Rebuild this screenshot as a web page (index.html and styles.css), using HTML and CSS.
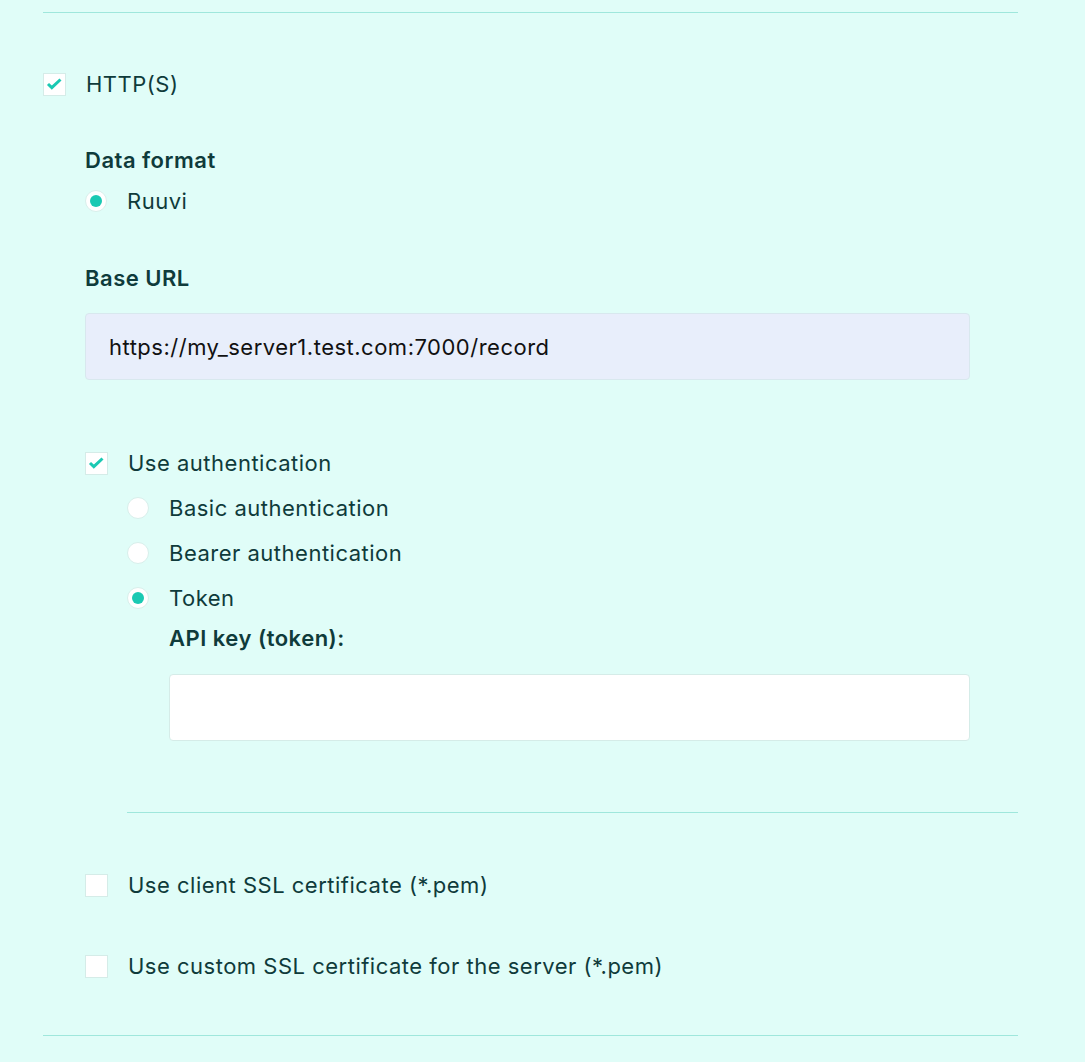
FILE: index.html
```html
<!DOCTYPE html>
<html>
<head>
<meta charset="utf-8">
<link rel="stylesheet" href="styles.css">
</head>
<body>
<div class="page">
  <div class="rule"></div>
  <label class="row row-http">
    <span class="cbox checked"><svg viewBox="0 0 21 21" width="21" height="21"><path d="M4 10 L7.8 13.6 L16.5 5.5" fill="none" stroke="#1bc9b3" stroke-width="3" stroke-linecap="butt" stroke-linejoin="miter"/></svg></span>
    <span class="label">HTTP(S)</span>
  </label>
  <div class="section">
    <div class="heading h-format">Data format</div>
    <label class="row row-ruuvi">
      <span class="radio checked"></span>
      <span class="label">Ruuvi</span>
    </label>
    <div class="heading h-url">Base URL</div>
    <div class="input input-url">https://my_server1.test.com:7000/record</div>
    <label class="row row-auth">
      <span class="cbox checked"><svg viewBox="0 0 21 21" width="21" height="21"><path d="M4 10 L7.8 13.6 L16.5 5.5" fill="none" stroke="#1bc9b3" stroke-width="3" stroke-linecap="butt" stroke-linejoin="miter"/></svg></span>
      <span class="label">Use authentication</span>
    </label>
    <div class="auth">
      <label class="row row-radio first">
        <span class="radio"></span>
        <span class="label">Basic authentication</span>
      </label>
      <label class="row row-radio">
        <span class="radio"></span>
        <span class="label">Bearer authentication</span>
      </label>
      <label class="row row-radio">
        <span class="radio checked"></span>
        <span class="label">Token</span>
      </label>
      <div class="token">
        <div class="heading h-api">API key (token):</div>
        <div class="input input-token"></div>
      </div>
      <div class="rule rule-inner"></div>
    </div>
    <label class="row row-ssl">
      <span class="cbox"></span>
      <span class="label">Use client SSL certificate (*.pem)</span>
    </label>
    <label class="row row-ssl2">
      <span class="cbox"></span>
      <span class="label">Use custom SSL certificate for the server (*.pem)</span>
    </label>
  </div>
  <div class="rule rule-bottom"></div>
</div>
</body>
</html>
```
FILE: styles.css
```css
html, body {
  margin: 0;
  padding: 0;
  background: #e0fdf8;
}
body {
  font-family: Inter, "Noto Sans", sans-serif;
  color: #0f3b3b;
  font-size: 22px;
  letter-spacing: 0.5px;
}
.page {
  width: 975px;
  margin-left: 43px;
  padding-top: 12px;
  height: 1050px;
}
.rule {
  height: 1px;
  background: #9fe7dc;
}
.row {
  display: flex;
  align-items: center;
  height: 30px;
}
.cbox {
  width: 21px;
  height: 21px;
  flex: none;
  background: #fff;
  border: 1px solid #d5ece8;
  margin-right: 20px;
  display: flex;
  align-items: center;
  justify-content: center;
}
.cbox svg { width: 21px; height: 21px; display: block; }
.radio {
  width: 20px;
  height: 20px;
  flex: none;
  border-radius: 50%;
  background: #fff;
  border: 1px solid #d8efeb;
  margin-right: 20px;
  position: relative;
}
.radio.checked::after {
  content: "";
  position: absolute;
  left: 4px;
  top: 4px;
  width: 12px;
  height: 12px;
  border-radius: 50%;
  background: #1bc9b3;
}
.label { line-height: 30px; }
.row-http { margin-top: 56px; }
.section { padding-left: 42px; }
.heading {
  font-weight: 600;
  line-height: 30px;
  height: 30px;
}
.h-format { margin-top: 46px; }
.row-ruuvi { margin-top: 11px; }
.h-url { margin-top: 47px; }
.input {
  box-sizing: border-box;
  height: 67px;
  width: 885px;
  border: 1px solid #d8e8ee;
  border-radius: 4px;
  display: flex;
  align-items: center;
  padding-left: 23px;
}
.input-url {
  margin-top: 20px;
  background: #e8eefb;
  color: #111;
}
.row-auth { margin-top: 68px; }
.auth { padding-left: 42px; }
.row-radio { margin-top: 15px; }
.token { padding-left: 42px; }
.h-api { margin-top: 10px; }
.input-token {
  margin-top: 21px;
  width: 801px;
  background: #fff;
  border-color: #d5ece8;
}
.rule-inner { margin-top: 71px; }
.row-ssl { margin-top: 57px; }
.row-ssl2 { margin-top: 51px; }
.rule-bottom { margin-top: 54px; }
```
